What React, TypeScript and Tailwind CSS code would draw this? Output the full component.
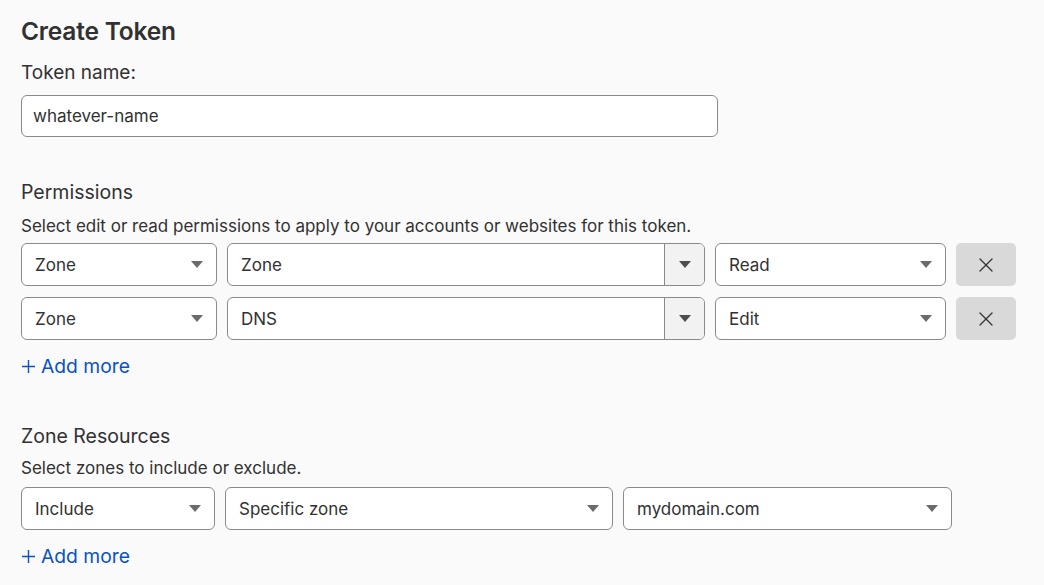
import { X } from "lucide-react";

function Caret({ dark }: { dark?: boolean }) {
  return (
    <svg width="12" height="7" viewBox="0 0 12 7" className="shrink-0">
      <path d="M0 0h12L6 7z" fill={dark ? "#4d4d4d" : "#6b6b6b"} />
    </svg>
  );
}

function Select({ value, className }: { value: string; className: string }) {
  return (
    <div
      className={`flex h-[43px] items-center justify-between rounded-[6px] border border-[#8a8a8a] bg-white pl-[13px] pr-[13px] ${className}`}
    >
      <span className="pt-[3px] text-[17px] text-[#313131]">{value}</span>
      <Caret />
    </div>
  );
}

function SplitSelect({ value }: { value: string }) {
  return (
    <div className="flex h-[43px] w-[478px] overflow-hidden rounded-[6px] border border-[#8a8a8a] bg-white">
      <div className="flex flex-1 items-center pl-[13px] pt-[3px] text-[17px] text-[#313131]">{value}</div>
      <div className="flex w-[40px] items-center justify-center border-l border-[#8a8a8a] bg-[#f2f2f2]">
        <Caret dark />
      </div>
    </div>
  );
}

function RemoveButton() {
  return (
    <button className="ml-[10px] flex h-[43px] w-[60px] items-center justify-center rounded-[5px] bg-[#d9d9d9]">
      <X className="h-[24px] w-[24px] text-[#333]" strokeWidth={1.3} />
    </button>
  );
}

function AddMore() {
  return (
    <button className="flex h-[28px] items-center text-[19.3px] text-[#0a52c4]">
      <svg width="13" height="13" viewBox="0 0 13 13" className="ml-[1px] mr-[6px]">
        <path d="M6.5 0v13M0 6.5h13" stroke="#0a52c4" strokeWidth="1.4" />
      </svg>
      Add more
    </button>
  );
}

function PermissionRow({ resource, item, level }: { resource: string; item: string; level: string }) {
  return (
    <div className="flex items-center">
      <Select value={resource} className="w-[196px] mr-[10px]" />
      <SplitSelect value={item} />
      <Select value={level} className="w-[231px] ml-[10px]" />
      <RemoveButton />
    </div>
  );
}

export default function App() {
  return (
    <div
      className="min-h-[585px] bg-[#fafafa] px-[21px] pt-[15px] text-[#313131]"
      style={{ fontFamily: "Inter, 'Noto Sans', sans-serif" }}
    >
      <h1 className="text-[24.5px] font-semibold leading-[32px] tracking-[-0.2px]">Create Token</h1>

      <label className="mt-[12px] block text-[19px] leading-[28px]">Token name:</label>
      <div className="mt-[8px] flex h-[42px] w-[697px] items-center rounded-[6px] border border-[#8a8a8a] bg-white px-[11px] pt-[2px] text-[17px]">
        whatever-name
      </div>

      <h2 className="mt-[41px] text-[19.5px] leading-[28px]">Permissions</h2>
      <p className="mt-[8px] text-[17px] leading-[24px]">
        Select edit or read permissions to apply to your accounts or websites for this token.
      </p>
      <div className="mt-[5px] flex flex-col gap-[11px]">
        <PermissionRow resource="Zone" item="Zone" level="Read" />
        <PermissionRow resource="Zone" item="DNS" level="Edit" />
      </div>
      <div className="mt-[12px]">
        <AddMore />
      </div>

      <h2 className="mt-[42px] text-[19.5px] leading-[28px]">Zone Resources</h2>
      <p className="mt-[6px] text-[17px] leading-[24px]">Select zones to include or exclude.</p>
      <div className="mt-[7px] flex items-center gap-[10px]">
        <Select value="Include" className="w-[194px]" />
        <Select value="Specific zone" className="w-[388px]" />
        <Select value="mydomain.com" className="w-[329px]" />
      </div>
      <div className="mt-[12px]">
        <AddMore />
      </div>
    </div>
  );
}
